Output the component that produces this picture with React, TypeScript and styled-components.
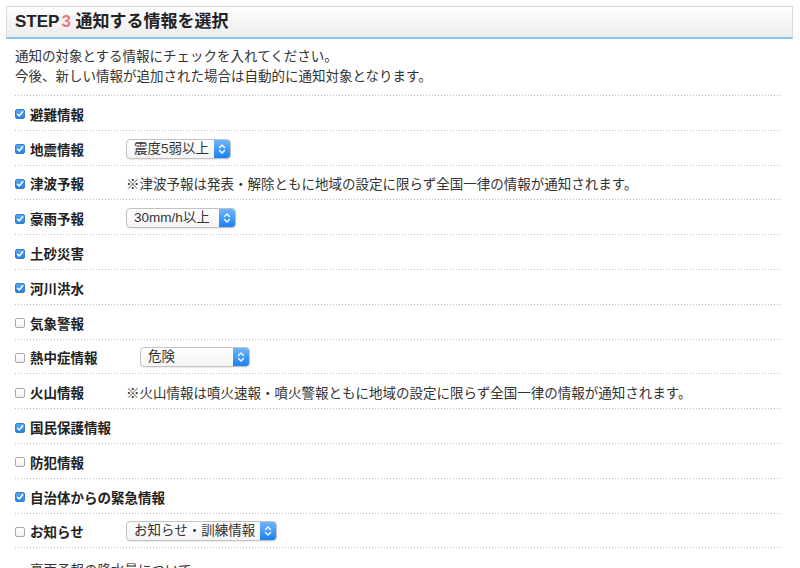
import styled, { createGlobalStyle } from "styled-components";

type Item = {
  label: string;
  checked: boolean;
  select?: { value: string; width: number; offset?: number };
  note?: string;
};

const items: Item[] = [
  { label: "避難情報", checked: true },
  { label: "地震情報", checked: true, select: { value: "震度5弱以上", width: 105 } },
  {
    label: "津波予報",
    checked: true,
    note: "※津波予報は発表・解除ともに地域の設定に限らず全国一律の情報が通知されます。",
  },
  { label: "豪雨予報", checked: true, select: { value: "30mm/h以上", width: 110 } },
  { label: "土砂災害", checked: true },
  { label: "河川洪水", checked: true },
  { label: "気象警報", checked: false },
  { label: "熱中症情報", checked: false, select: { value: "危険", width: 110, offset: 14 } },
  {
    label: "火山情報",
    checked: false,
    note: "※火山情報は噴火速報・噴火警報ともに地域の設定に限らず全国一律の情報が通知されます。",
  },
  { label: "国民保護情報", checked: true },
  { label: "防犯情報", checked: false },
  { label: "自治体からの緊急情報", checked: true },
  { label: "お知らせ", checked: false, select: { value: "お知らせ・訓練情報", width: 151 } },
];

export default function App() {
  return (
    <>
      <GlobalStyle />
      <Page>
        <StepHeader>
          STEP<StepNum>3</StepNum> 通知する情報を選択
        </StepHeader>
        <Body>
          <Intro>
            通知の対象とする情報にチェックを入れてください。
            <br />
            今後、新しい情報が追加された場合は自動的に通知対象となります。
          </Intro>
          <List>
            {items.map((item) => (
              <Row key={item.label}>
                <Check $checked={item.checked}>
                  {item.checked && (
                    <svg width="8" height="8" viewBox="0 0 8 8">
                      <path
                        d="M1.5 4.2 L3.3 6 L6.6 1.8"
                        fill="none"
                        stroke="#fff"
                        strokeWidth="1.5"
                        strokeLinecap="round"
                        strokeLinejoin="round"
                      />
                    </svg>
                  )}
                </Check>
                <Label>{item.label}</Label>
                {item.select && (
                  <Select $width={item.select.width} $offset={item.select.offset ?? 0}>
                    <SelectText>{item.select.value}</SelectText>
                    <Stepper>
                      <svg width="8" height="12" viewBox="0 0 8 12">
                        <path
                          d="M1.5 4.5 L4 2 L6.5 4.5 M1.5 7.5 L4 10 L6.5 7.5"
                          fill="none"
                          stroke="#fff"
                          strokeWidth="1.4"
                          strokeLinecap="round"
                          strokeLinejoin="round"
                        />
                      </svg>
                    </Stepper>
                  </Select>
                )}
                {item.note && <Note>{item.note}</Note>}
              </Row>
            ))}
          </List>
          <SubHeading>豪雨予報の降水量について</SubHeading>
        </Body>
      </Page>
    </>
  );
}

const GlobalStyle = createGlobalStyle`
  html, body {
    margin: 0;
    padding: 0;
    background: #fff;
  }
  body {
    font-family: "Liberation Sans", "Noto Sans CJK JP", sans-serif;
    color: #333;
    overflow: hidden;
  }
`;

const Page = styled.div`
  padding: 6px 7px 0 6px;
`;

const StepHeader = styled.h2`
  margin: 0;
  height: 30px;
  line-height: 30px;
  padding: 0 8px;
  font-size: 17px;
  font-weight: bold;
  color: #222;
  background: linear-gradient(#fefefe, #ececec);
  border: 1px solid #d9d9d9;
  border-bottom: 2px solid #86c5ea;
`;

const StepNum = styled.span`
  color: #ec7a7a;
  margin-left: 2px;
`;

const Body = styled.div`
  padding: 0 10px 0 9px;
`;

const Intro = styled.p`
  margin: 0;
  padding: 8px 0 9px;
  font-size: 13.5px;
  line-height: 20px;
  color: #333;
  background-image: linear-gradient(to right, #bdbdbd 1px, transparent 1px);
  background-size: 3px 1px;
  background-repeat: repeat-x;
  background-position: left bottom;
`;

const List = styled.div`
  display: flex;
  flex-direction: column;
`;

const Row = styled.div`
  display: flex;
  align-items: center;
  height: 34.8px;
  padding-top: 1px;
  box-sizing: border-box;
  background-image: linear-gradient(to right, #bdbdbd 1px, transparent 1px);
  background-size: 3px 1px;
  background-repeat: repeat-x;
  background-position: left bottom;
`;

const Check = styled.span<{ $checked: boolean }>`
  width: 10px;
  height: 10px;
  margin-top: 1px;
  box-sizing: border-box;
  border-radius: 2px;
  display: flex;
  align-items: center;
  justify-content: center;
  flex-shrink: 0;
  border: 1px solid ${(p) => (p.$checked ? "#2f7fd6" : "#a9a9a9")};
  background: ${(p) =>
    p.$checked ? "linear-gradient(#5aa6f4, #2a80e4)" : "linear-gradient(#ffffff, #f2f2f2)"};
`;

const Label = styled.span`
  width: 96px;
  padding-left: 5px;
  font-size: 13.5px;
  font-weight: bold;
  color: #222;
  white-space: nowrap;
`;

const Select = styled.div<{ $width: number; $offset: number }>`
  width: ${(p) => p.$width}px;
  margin-left: ${(p) => p.$offset}px;
  height: 20px;
  box-sizing: border-box;
  display: flex;
  align-items: stretch;
  border: 1px solid #c2c2c2;
  border-radius: 4px;
  background: linear-gradient(#ffffff, #f4f4f4);
  box-shadow: 0 1px 1px rgba(0, 0, 0, 0.08);
  overflow: hidden;
`;

const SelectText = styled.span`
  flex: 1;
  padding-left: 7px;
  font-size: 13.5px;
  line-height: 18px;
  color: #333;
  white-space: nowrap;
`;

const Stepper = styled.span`
  width: 16px;
  display: flex;
  align-items: center;
  justify-content: center;
  background: linear-gradient(#6db5fb, #1c7ff5);
`;

const Note = styled.span`
  font-size: 13.5px;
  color: #333;
  white-space: nowrap;
`;

const SubHeading = styled.h3`
  margin: 11px 0 0 15px;
  font-size: 13.5px;
  font-weight: normal;
  color: #333;
`;
